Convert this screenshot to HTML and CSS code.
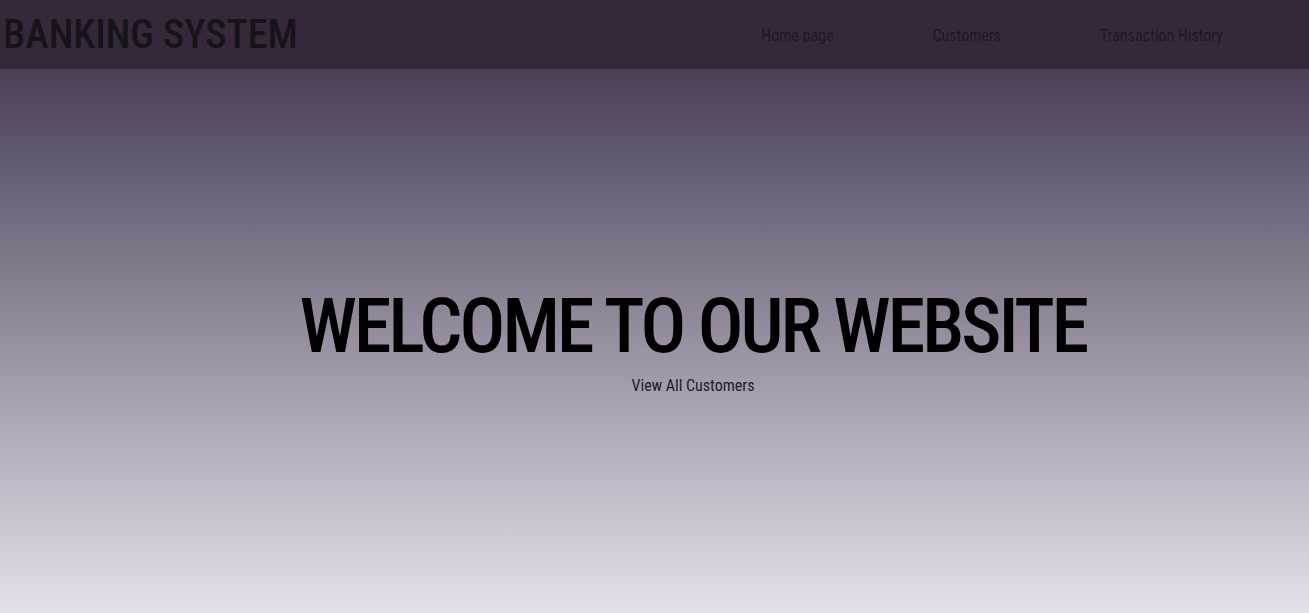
FILE: index.html
```html
<!DOCTYPE html>
<html>
<head>
<meta charset="utf-8">
<link rel="stylesheet" href="styles.css">
</head>
<body>
<header class="topbar">
  <div class="brand">BANKING SYSTEM</div>
  <nav class="nav">
    <a class="nav-link" href="#">Home page</a>
    <a class="nav-link" href="#">Customers</a>
    <a class="nav-link" href="#">Transaction History</a>
  </nav>
</header>
<main class="hero">
  <h1 class="hero-title">WELCOME TO OUR WEBSITE</h1>
  <a class="hero-link" href="#">View All Customers</a>
</main>
</body>
</html>
```
FILE: styles.css
```css
html, body {
  margin: 0;
  padding: 0;
  height: 100%;
}
body {
  font-family: "Roboto Condensed", "Roboto", sans-serif;
  font-stretch: condensed;
  background: #e5e0eb;
  border-top: 1px solid #2f2f2f;
  box-sizing: border-box;
  display: flex;
  flex-direction: column;
}
.topbar {
  height: 68px;
  flex: none;
  background: #35283a;
  display: flex;
  align-items: center;
  justify-content: space-between;
}
.brand {
  font-size: 40px;
  font-weight: 500;
  color: #161419;
  padding-left: 3px;
  line-height: 1;
}
.nav {
  display: flex;
  padding-right: 86px;
}
.nav-link {
  color: #1d1a22;
  text-decoration: none;
  font-size: 16px;
  margin-left: 99px;
}
.nav-link:first-child { margin-left: 0; }
.hero {
  flex: 1;
  display: flex;
  flex-direction: column;
  align-items: center;
  justify-content: center;
  padding-left: 77px;
  padding-bottom: 6px;
  background: linear-gradient(#4a3f55, #e5e0eb);
}
.hero-title {
  margin: 0;
  font-size: 76px;
  font-weight: 500;
  letter-spacing: -3px;
  color: #000;
  line-height: 1.2;
}
.hero-link {
  color: #1d1a2c;
  text-decoration: none;
  font-size: 16px;
  margin-top: 4px;
}
```
